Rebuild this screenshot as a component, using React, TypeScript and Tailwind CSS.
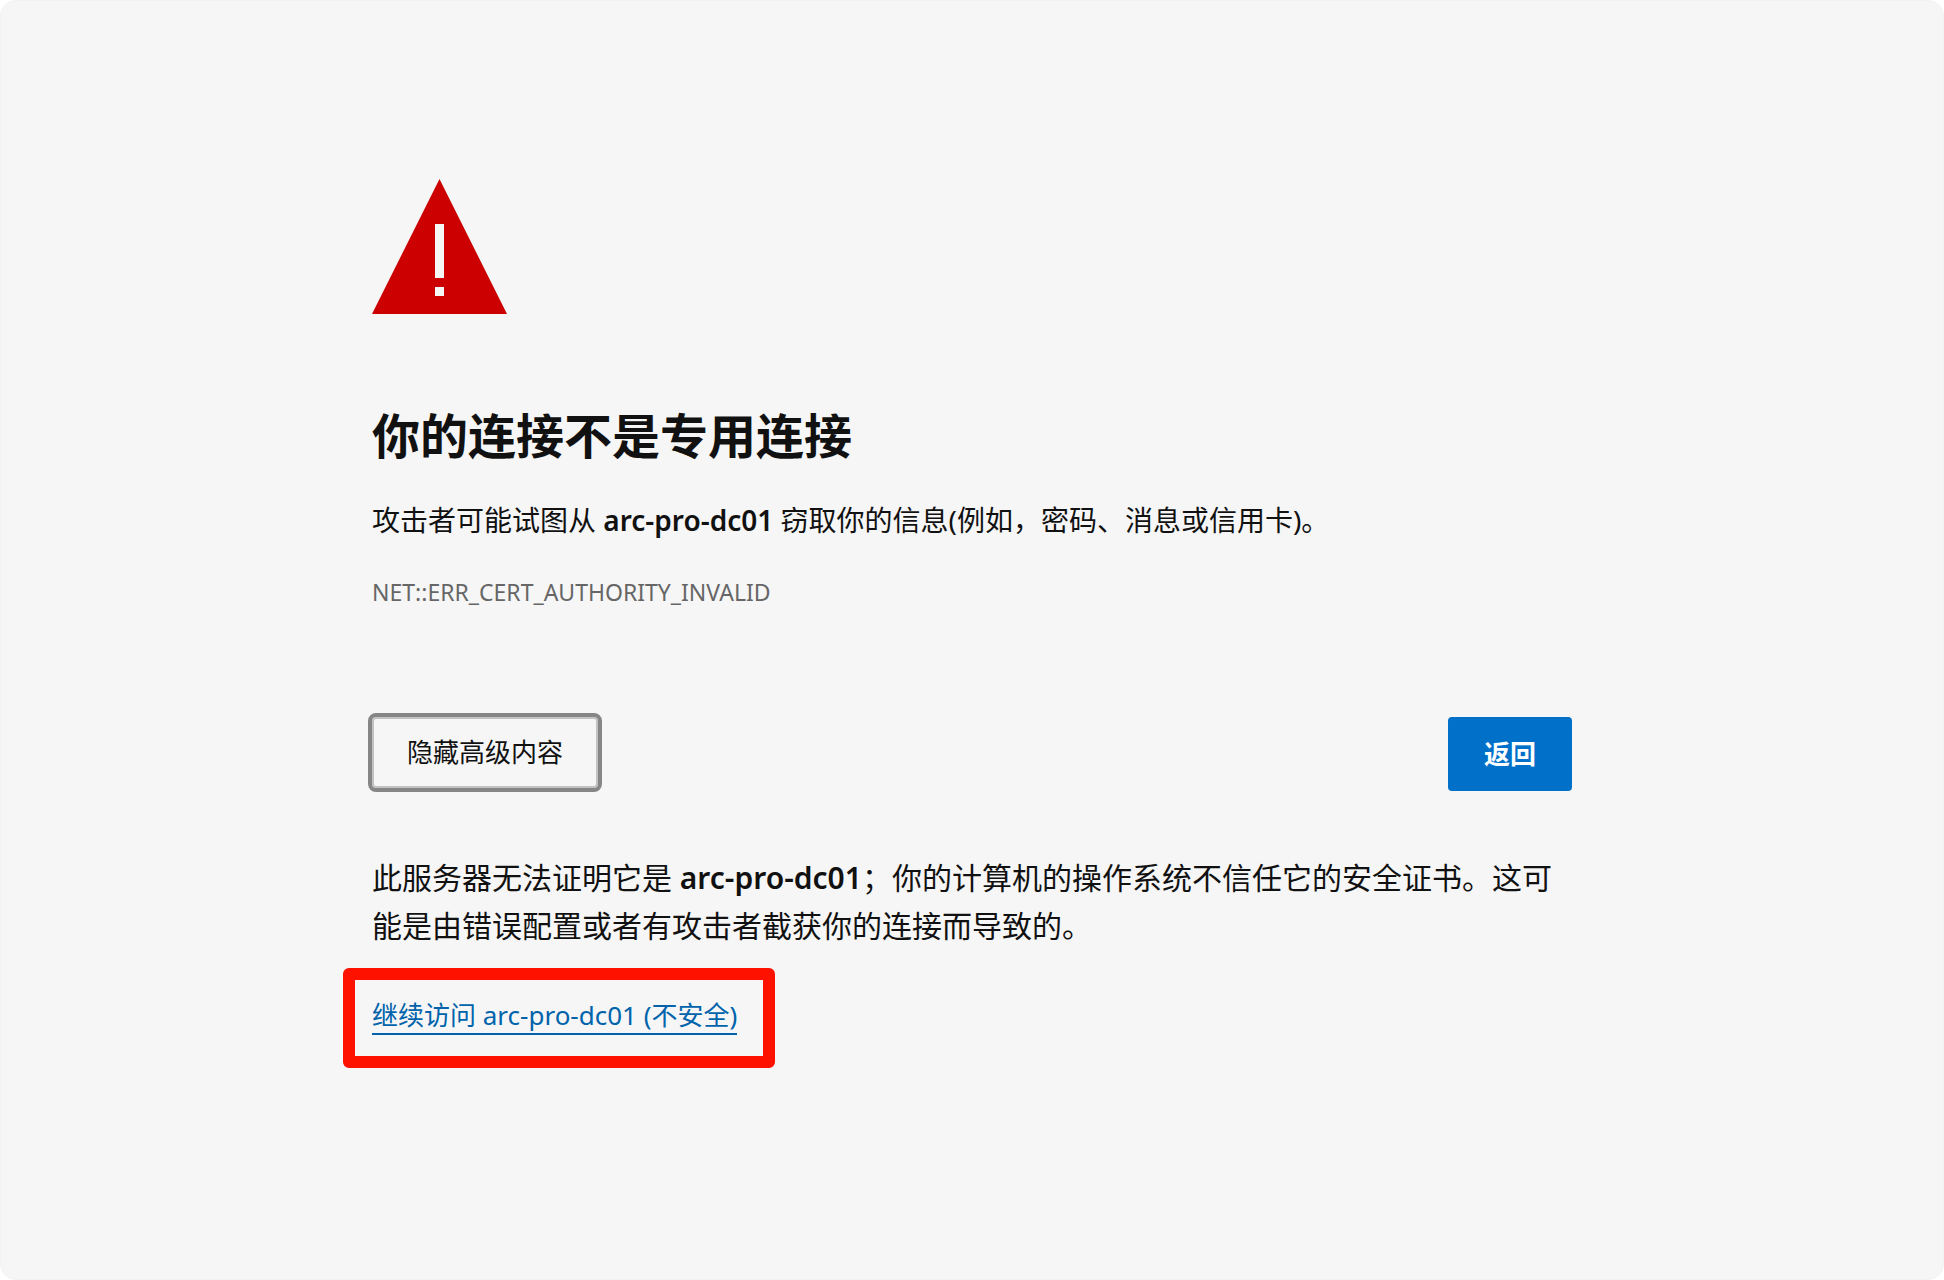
import { useState } from 'react';

const HOST = 'arc-pro-dc01';

function WarningIcon() {
  return (
    <svg viewBox="0 0 15 15" className="block h-[135px] w-[135px]" role="img" aria-label="警告">
      <path d="M7.5 0 15 15H0z" fill="#cc0000" />
      <path d="M7 5h1v6H7zM7 12h1v1H7z" fill="#f6f6f6" shapeRendering="crispEdges" />
    </svg>
  );
}

export default function App() {
  const [showDetails, setShowDetails] = useState(true);

  return (
    <div className="min-h-screen bg-white font-['Noto_Sans','Noto_Sans_CJK_SC',sans-serif] text-[#111111]">
      <div className="min-h-screen rounded-2xl border border-[#f2f2f2] bg-[#f6f6f6] px-6">
        <main className="mx-auto max-w-[1200px] pt-[178px] pb-16">
          <WarningIcon />

          <h1 className="mt-[90px] text-5xl leading-[64px] font-bold">你的连接不是专用连接</h1>
          <p className="mt-8 text-[28px] leading-10">
            攻击者可能试图从 <strong className="font-semibold">{HOST}</strong>{' '}
            窃取你的信息(例如，密码、消息或信用卡)。
          </p>
          <p className="mt-9 text-[23px] leading-8 text-[#666666]">NET::ERR_CERT_AUTHORITY_INVALID</p>

          <div className="mt-[109px] flex items-start justify-between">
            <button
              onClick={() => setShowDetails(!showDetails)}
              className="h-[71px] rounded-sm border-2 border-[#c2c2c2] px-[33px] text-[26px] outline-4 outline-[#868686]"
            >
              {showDetails ? '隐藏高级内容' : '高级'}
            </button>
            <button className="h-[74px] rounded bg-[#0070c9] px-9 text-[26px] font-bold text-white">
              返回
            </button>
          </div>

          {showDetails && (
            <>
              <p className="mt-[63px] text-3xl leading-[48px]">
                此服务器无法证明它是 <strong className="font-semibold">{HOST}</strong>
                ；你的计算机的操作系统不信任它的安全证书。这可能是由错误配置或者有攻击者截获你的连接而导致的。
              </p>
              <div className="mt-[18px] -ml-[29px] flex h-[100px] w-[432px] items-center rounded-md border-12 border-[#ff1100] pb-1 pl-[17px]">
                <a
                  href="#proceed"
                  className="border-b-2 border-[#0063ab] text-[26px] leading-9 whitespace-nowrap text-[#0063ab]"
                >
                  继续访问 {HOST} (不安全)
                </a>
              </div>
            </>
          )}
        </main>
      </div>
    </div>
  );
}
